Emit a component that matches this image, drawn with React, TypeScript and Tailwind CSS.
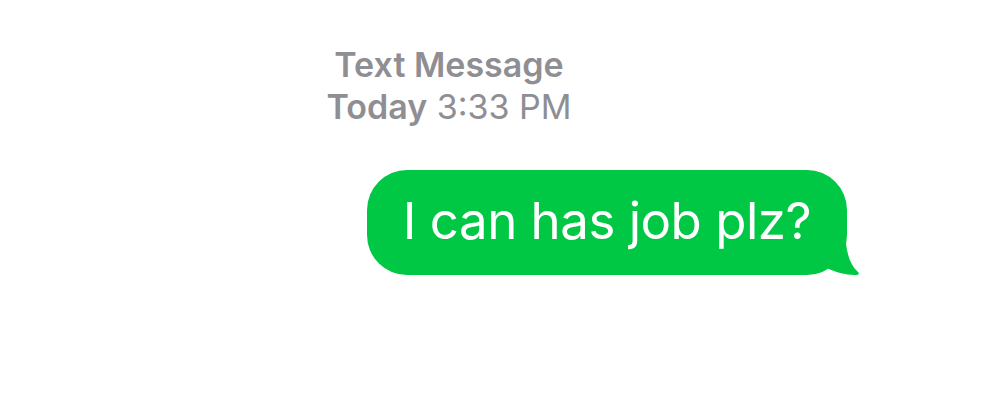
export default function App() {
  return (
    <div className="h-[400px] w-[1000px] bg-white font-['Inter','Liberation_Sans',sans-serif]">
      <div className="flex w-[898px] flex-col">
        <div className="flex flex-col items-center pt-[44px] text-[34px] leading-[42px] text-[#8e8e93]">
          <div className="font-semibold">Text Message</div>
          <div>
            <span className="font-semibold">Today</span> 3:33 PM
          </div>
        </div>
        <div className="mt-[42px] flex justify-end pr-[51px]">
          <div className="relative">
            <div className="relative z-10 flex h-[105px] items-center rounded-[40px] bg-[#00c844] px-[36px] pb-[2px] text-[51px] tracking-[-0.5px] text-white">
              I can has job plz?
            </div>
            <svg
              className="absolute bottom-0 right-[-12px] z-0"
              width="44"
              height="50"
              viewBox="0 0 44 50"
            >
              <path
                d="M0 0 H30 C30 22 33 38 43 47 C45 49 43 50 40 50 C30 50 20 47 12 43 C6 47 2 48 0 48 Z"
                fill="#00c844"
              />
            </svg>
          </div>
        </div>
      </div>
    </div>
  );
}
